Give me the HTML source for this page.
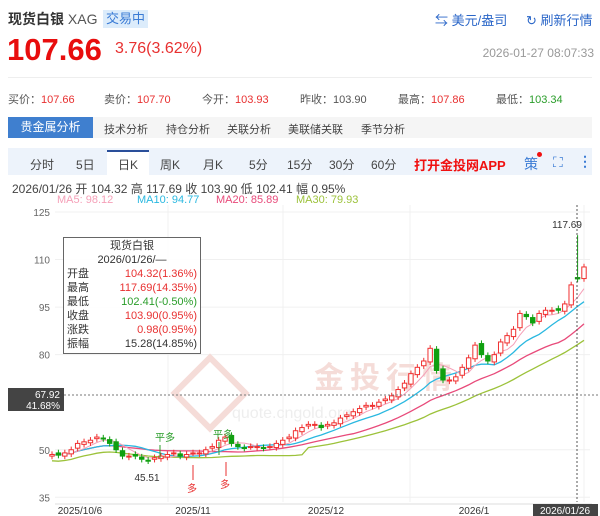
<!DOCTYPE html>
<html><head><meta charset="utf-8"><style>
*{margin:0;padding:0;box-sizing:border-box}
body{width:600px;height:516px;overflow:hidden;background:#fff;font-family:"Liberation Sans","Noto Sans CJK SC",sans-serif;color:#333;position:relative}
.a{position:absolute;white-space:nowrap}
</style></head><body>
<div class="a" style="left:8px;top:9px;font-size:14px;font-weight:bold;color:#333">现货白银 <span style="font-weight:normal;color:#555;font-size:14px">XAG</span></div>
<div class="a" style="left:103px;top:10px;width:45px;height:18px;background:#dcecfb;color:#3a7bd5;font-size:13px;text-align:center;line-height:18px">交易中</div>
<div class="a" style="left:435px;top:10px;font-size:13px;color:#2a66c8">⇆ 美元/盎司</div>
<div class="a" style="left:526px;top:10px;font-size:13px;color:#2a66c8">↻ 刷新行情</div>
<div class="a" style="left:7px;top:32px;font-size:31px;font-weight:bold;color:#e80d0d">107.66</div>
<div class="a" style="left:115px;top:40px;font-size:16px;color:#e83030">3.76(3.62%)</div>
<div class="a" style="right:6px;top:46px;font-size:12px;color:#999">2026-01-27 08:07:33</div>
<div class="a" style="left:8px;top:77px;width:584px;height:1px;background:#eee"></div>
<div class="a" style="left:8px;top:91px;font-size:11px;color:#555">买价：<span style="color:#e83030">107.66</span></div>
<div class="a" style="left:104px;top:91px;font-size:11px;color:#555">卖价：<span style="color:#e83030">107.70</span></div>
<div class="a" style="left:202px;top:91px;font-size:11px;color:#555">今开：<span style="color:#e83030">103.93</span></div>
<div class="a" style="left:300px;top:91px;font-size:11px;color:#555">昨收：103.90</div>
<div class="a" style="left:398px;top:91px;font-size:11px;color:#555">最高：<span style="color:#e83030">107.86</span></div>
<div class="a" style="left:496px;top:91px;font-size:11px;color:#555">最低：<span style="color:#2a9d2a">103.34</span></div>
<div class="a" style="left:8px;top:117px;width:584px;height:21px;background:#f5f5f5"></div>
<div class="a" style="left:8px;top:117px;width:85px;height:21px;background:#3f7fcf;color:#fff;font-size:12px;line-height:21px;text-align:center">贵金属分析</div>
<div class="a" style="left:104px;top:121px;font-size:11px;color:#444">技术分析</div>
<div class="a" style="left:166px;top:121px;font-size:11px;color:#444">持仓分析</div>
<div class="a" style="left:227px;top:121px;font-size:11px;color:#444">关联分析</div>
<div class="a" style="left:288px;top:121px;font-size:11px;color:#444">美联储关联</div>
<div class="a" style="left:361px;top:121px;font-size:11px;color:#444">季节分析</div>
<div class="a" style="left:8px;top:148px;width:584px;height:27px;background:#edf3fb"></div>
<div class="a" style="left:107px;top:150px;width:42px;height:25px;background:#fff;border-top:2px solid #2a4f9a"></div>
<div class="a" style="left:30px;top:156px;font-size:12px;color:#444">分时</div>
<div class="a" style="left:76px;top:156px;font-size:12px;color:#444">5日</div>
<div class="a" style="left:118px;top:156px;font-size:12px;color:#444">日K</div>
<div class="a" style="left:160px;top:156px;font-size:12px;color:#444">周K</div>
<div class="a" style="left:203px;top:156px;font-size:12px;color:#444">月K</div>
<div class="a" style="left:249px;top:156px;font-size:12px;color:#444">5分</div>
<div class="a" style="left:287px;top:156px;font-size:12px;color:#444">15分</div>
<div class="a" style="left:329px;top:156px;font-size:12px;color:#444">30分</div>
<div class="a" style="left:371px;top:156px;font-size:12px;color:#444">60分</div>
<div class="a" style="left:414px;top:155px;font-size:13px;font-weight:bold;color:#f01010">打开金投网APP</div>
<div class="a" style="left:524px;top:154px;font-size:14px;color:#3a7bd5">策</div>
<div class="a" style="left:537px;top:152px;width:5px;height:5px;border-radius:50%;background:#f01010"></div>
<div class="a" style="left:553px;top:154px;font-size:14px;color:#3a7bd5">⛶</div>
<div class="a" style="left:578px;top:153px;font-size:14px;color:#3a7bd5;font-weight:bold">⋮</div>
<div class="a" style="left:12px;top:180px;font-size:12px;color:#444">2026/01/26 开 104.32 高 117.69 收 103.90 低 102.41 幅 0.95%</div>
<div class="a" style="left:57px;top:194px;font-size:11px;color:#f5a0b8">MA5: 98.12</div>
<div class="a" style="left:137px;top:194px;font-size:11px;color:#2ab8e0">MA10: 94.77</div>
<div class="a" style="left:216px;top:194px;font-size:11px;color:#e84a7a">MA20: 85.89</div>
<div class="a" style="left:296px;top:194px;font-size:11px;color:#9cc23a">MA30: 79.93</div>
<svg class="a" style="left:0;top:200px" width="600" height="316" id="c" font-family="Liberation Sans,Noto Sans CJK SC,sans-serif"></svg>
<div class="a" style="left:63px;top:237px;width:138px;height:117px;border:1px solid #666;background:rgba(255,255,255,.92);font-size:11px;line-height:14px;padding:1px 3px">
<div style="text-align:center">现货白银</div><div style="text-align:center">2026/01/26/—</div>
<div>开盘<span style="float:right;color:#e83030">104.32(1.36%)</span></div>
<div>最高<span style="float:right;color:#e83030">117.69(14.35%)</span></div>
<div>最低<span style="float:right;color:#2a9d2a">102.41(-0.50%)</span></div>
<div>收盘<span style="float:right;color:#e83030">103.90(0.95%)</span></div>
<div>涨跌<span style="float:right;color:#e83030">0.98(0.95%)</span></div>
<div>振幅<span style="float:right">15.28(14.85%)</span></div>
</div>
<script>
var s=document.getElementById('c'),h='';
function Y(p){return 12+(125-p)*3.17}
[125,110,95,80,50,35].forEach(function(p){var y=Y(p);h+='<line x1="55" x2="590" y1="'+y+'" y2="'+y+'" stroke="#f0f0f0"/><text x="50" y="'+(y+4)+'" font-size="10" fill="#666" text-anchor="end">'+p+'</text>'});
[168,283,410,584].forEach(function(x){h+='<line x1="'+x+'" x2="'+x+'" y1="5" y2="302" stroke="#f0f0f0"/>'});
h+='<text x="314" y="188" font-size="30" fill="#f5dcd8" font-weight="bold" letter-spacing="6">金投行情</text><text x="232" y="218" font-size="16" fill="#eee">quote.cngold.org</text><rect x="185" y="168" width="50" height="50" transform="rotate(45 210 193)" fill="none" stroke="#f5dcd8" stroke-width="6"/>';
var c=[48.5,48.3,49,50,52,52.5,53,54,53.5,52,50,48,48,48,47,46.5,47.5,48,48.5,49,48,48.5,49,49,50,51,53,54,52,51,50.5,51,51,50.5,51,52,53,54,56,57,58,58,57,58,58.5,60,61,62,63,64,64,65,66,67,69,71,74,76,78,82,75,72,72,73,76,79,83,80,78,80,84,86,88,93,92,90,93,94,94,94,96,102,104.3,107.66];
var n=c.length,dx=(584-52)/(n-1);
function ma(k){var pts=[];for(var i=0;i<n;i++){var a=0,m=0;for(var j=Math.max(0,i-k+1);j<=i;j++){a+=c[j];m++}var v=a/m-(k==30?(i<40?2:0):0);pts.push((52+i*dx).toFixed(1)+','+Y(v).toFixed(1))}return pts.join(' ')}
h+='<polyline fill="none" stroke="#9cc23a" stroke-width="1.3" points="'+ma(30)+'"/><polyline fill="none" stroke="#e84a7a" stroke-width="1.3" points="'+ma(20)+'"/><polyline fill="none" stroke="#2ab8e0" stroke-width="1.3" points="'+ma(10)+'"/><polyline fill="none" stroke="#f5a0b8" stroke-width="1" points="'+ma(5)+'"/>';
for(var i=0;i<n;i++){var o=i?c[i-1]+(i%3==1?0.5:-0.3):48,cl=c[i];if(i==n-2){o=104.32;cl=103.9}var x=52+i*dx,up=cl>=o,col=up?'#f03030':'#10a010';var hi=Math.max(o,cl)+1,lo=Math.min(o,cl)-1;if(i==n-2)hi=117.69;
h+='<line x1="'+x+'" x2="'+x+'" y1="'+Y(hi)+'" y2="'+Y(lo)+'" stroke="'+col+'"/><rect x="'+(x-2.2)+'" y="'+Y(Math.max(o,cl))+'" width="4.4" height="'+Math.max(1,Math.abs(o-cl)*3.17)+'" fill="'+(up?'#fff':col)+'" stroke="'+col+'"/>'}
h+='<line x1="577" x2="577" y1="5" y2="302" stroke="#555" stroke-dasharray="2,2"/><line x1="60" x2="598" y1="195" y2="195" stroke="#777" stroke-dasharray="2,2"/>';
h+='<text x="567" y="28" font-size="10" fill="#333" text-anchor="middle">117.69</text>';
h+='<rect x="8" y="188" width="56" height="23" fill="#444"/><text x="60" y="198" font-size="10" fill="#fff" text-anchor="end">67.92</text><text x="60" y="209" font-size="10" fill="#fff" text-anchor="end">41.68%</text>';
h+='<text x="147" y="281" font-size="10" fill="#333" text-anchor="middle">45.51</text>';
h+='<text x="155" y="241" font-size="10" fill="#2a9d2a">平多</text><line x1="160" x2="160" y1="245" y2="258" stroke="#2a9d2a"/><text x="213" y="238" font-size="10" fill="#2a9d2a">平多</text><line x1="219" x2="219" y1="242" y2="255" stroke="#2a9d2a"/>';
h+='<line x1="193" x2="193" y1="265" y2="280" stroke="#e83030"/><text x="187" y="292" font-size="10" fill="#e83030">多</text><line x1="226" x2="226" y1="262" y2="276" stroke="#e83030"/><text x="220" y="288" font-size="10" fill="#e83030">多</text>';
h+='<line x1="55" x2="592" y1="304" y2="304" stroke="#ddd"/>';
[[80,'2025/10/6'],[193,'2025/11'],[326,'2025/12'],[474,'2026/1']].forEach(function(t){h+='<text x="'+t[0]+'" y="314" font-size="10" fill="#333" text-anchor="middle">'+t[1]+'</text>'});
h+='<rect x="533" y="304" width="65" height="12" fill="#444"/><text x="565" y="314" font-size="10" fill="#fff" text-anchor="middle">2026/01/26</text>';
s.innerHTML=h;
</script>
</body></html>
